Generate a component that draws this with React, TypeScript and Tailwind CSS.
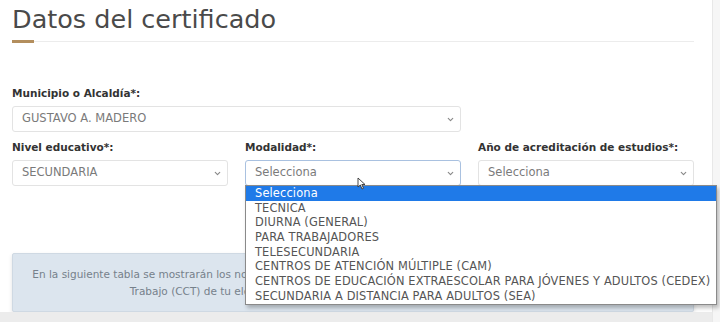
import { ChevronDown } from 'lucide-react';

const opciones = [
  'Selecciona',
  'TECNICA',
  'DIURNA (GENERAL)',
  'PARA TRABAJADORES',
  'TELESECUNDARIA',
  'CENTROS DE ATENCIÓN MÚLTIPLE (CAM)',
  'CENTROS DE EDUCACIÓN EXTRAESCOLAR PARA JÓVENES Y ADULTOS (CEDEX)',
  'SECUNDARIA A DISTANCIA PARA ADULTOS (SEA)',
];

function Field({
  label,
  value,
  focused = false,
  className = '',
  children,
}: {
  label: string;
  value: string;
  focused?: boolean;
  className?: string;
  children?: React.ReactNode;
}) {
  return (
    <div className={`relative ${className}`}>
      <div className="text-[10.5px] font-bold text-[#333] leading-[11px] mb-[7px]">{label}</div>
      <div
        className={`h-[26px] flex items-center justify-between pl-[9px] pr-[5px] rounded-[3px] border bg-white ${
          focused ? 'border-[#a9c1e0]' : 'border-[#e3e3e3]'
        }`}
      >
        <span className="text-[11.5px] text-[#7a7a7a]">{value}</span>
        <ChevronDown className="w-[9px] h-[9px] text-[#888]" strokeWidth={3} />
      </div>
      {children}
    </div>
  );
}

export default function App() {
  return (
    <div
      className="w-[720px] h-[322px] overflow-hidden bg-white relative"
      style={{ fontFamily: '"DejaVu Sans", "Open Sans", sans-serif' }}
    >
      <div className="absolute top-0 bottom-0 left-[712px] w-[8px] bg-[#f6f6f6] border-l border-[#e8e8e8]" />
      <div className="w-[682px] ml-[12px] pt-[4px]">
        <h1 className="text-[25.5px] leading-[31px] text-[#4a4a4a]">Datos del certificado</h1>
        <div className="relative mt-[6px] h-[1px] bg-[#ececec]">
          <div className="absolute left-0 top-[-1px] w-[22px] h-[3px] bg-[#b38e5d]" />
        </div>

        <div className="grid grid-cols-[216px_216px_216px] gap-x-[17px] gap-y-[10px] mt-[46px]">
          <Field label="Municipio o Alcaldía*:" value="GUSTAVO A. MADERO" className="col-span-2" />
          <div />
          <Field label="Nivel educativo*:" value="SECUNDARIA" />
          <Field label="Modalidad*:" value="Selecciona" focused className="z-10">
            <div className="absolute left-0 top-[43px] w-[472px] bg-white border border-[#8a8a8a] shadow-[2px_3px_4px_rgba(0,0,0,0.25)]">
              {opciones.map((o, i) => (
                <div
                  key={o}
                  className={`h-[14.7px] leading-[14.7px] pl-[9px] text-[11.4px] tracking-[0.15px] whitespace-nowrap ${
                    i === 0 ? 'bg-[#1f7ae8] text-white' : 'text-[#555]'
                  }`}
                >
                  {o}
                </div>
              ))}
            </div>
            <svg className="absolute left-[112px] top-[35px]" width="9" height="13" viewBox="0 0 9 13">
              <path d="M1 1 L1 10 L3.3 8 L5 12 L6.5 11.3 L4.8 7.5 L8 7.5 Z" fill="#fff" stroke="#333" strokeWidth="0.9" />
            </svg>
          </Field>
          <Field label="Año de acreditación de estudios*:" value="Selecciona" />
        </div>

        <div className="mt-[67px] h-[59px] bg-[#dce5ee] border border-[#cfd9e3] rounded-[2px] shadow-[0_2px_4px_rgba(0,0,0,0.12)] flex items-center justify-center">
          <p className="text-[10.5px] leading-[17px] text-[#76818b] text-center whitespace-nowrap">
            En la siguiente tabla se mostrarán los nombres, domicilios y turnos de las escuelas registradas con su Clave de Centro de
            <br />
            Trabajo (CCT) de tu elección. Selecciona la escuela en la que concluiste tus estudios.
          </p>
        </div>
      </div>
      <div className="absolute left-0 right-[8px] bottom-0 h-[10px] bg-[#ececec]" />
    </div>
  );
}
